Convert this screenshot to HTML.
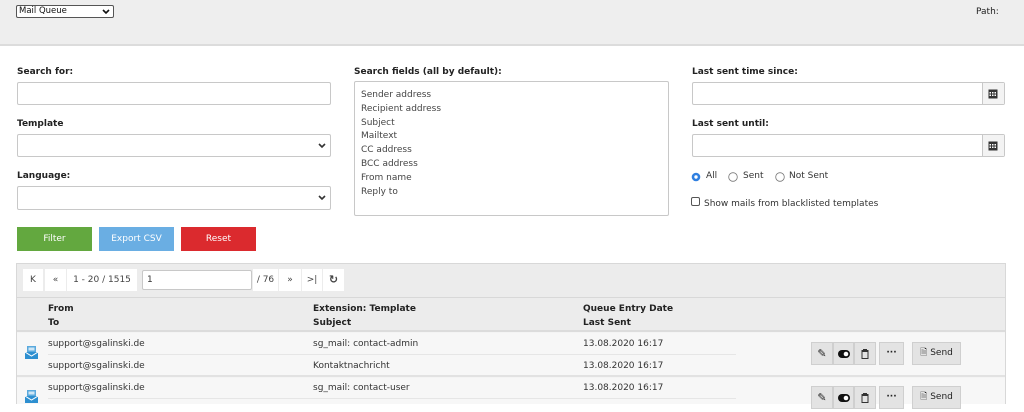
<!DOCTYPE html>
<html><head><meta charset="utf-8"><style>
*{box-sizing:border-box;margin:0;padding:0}
body{width:1024px;height:404px;overflow:hidden;background:#fff;font-family:"DejaVu Sans","Liberation Sans",sans-serif;font-size:9px;color:#333;position:relative}
.a{position:absolute}
.lbl{font-weight:bold;color:#222}
.inp{background:#fff;border:1px solid #c8c8c8;border-radius:2px}
.btn{color:#fff;text-align:center;line-height:24px;font-size:9px}
.pb{background:#fff;height:22px;top:269px;line-height:22px;text-align:center;color:#444}
.hdr{font-weight:bold;color:#222}
.ab{background:#e3e3e3;border:1px solid #cfcfcf;height:23px;line-height:21px;text-align:center;color:#222}
</style></head><body>
<div class="a" style="left:0;top:0;width:1024px;height:46px;background:#eeeeee;border-bottom:2px solid #dcdcdc"></div>
<div class="a" style="left:16px;top:5px;width:98px;height:13px;border:1px solid #555;border-radius:2px;background:#fff;font-size:8.5px;line-height:11px;padding-left:2px;color:#111">Mail Queue<svg class="a" style="right:3px;top:3px" width="8" height="6"><path d="M1 1 L4 4 L7 1" stroke="#111" stroke-width="1.6" fill="none"/></svg></div>
<div class="a" style="left:976px;top:7px;color:#222">Path:</div>

<div class="a lbl" style="left:17px;top:67px">Search for:</div>
<div class="a inp" style="left:17px;top:82px;width:314px;height:23px"></div>
<div class="a lbl" style="left:17px;top:119px">Template</div>
<div class="a inp" style="left:17px;top:134px;width:314px;height:23px"><svg class="a" style="right:4px;top:8px" width="8" height="6"><path d="M1 1 L4 4 L7 1" stroke="#333" stroke-width="1.6" fill="none"/></svg></div>
<div class="a lbl" style="left:17px;top:171px">Language:</div>
<div class="a inp" style="left:17px;top:186px;width:314px;height:24px"><svg class="a" style="right:4px;top:8px" width="8" height="6"><path d="M1 1 L4 4 L7 1" stroke="#333" stroke-width="1.6" fill="none"/></svg></div>
<div class="a btn" style="left:17px;top:227px;width:75px;height:24px;background:#63a83f">Filter</div>
<div class="a btn" style="left:99px;top:227px;width:75px;height:24px;background:#6aaee3">Export CSV</div>
<div class="a btn" style="left:181px;top:227px;width:75px;height:24px;background:#db2a2e">Reset</div>

<div class="a lbl" style="left:354px;top:67px">Search fields (all by default):</div>
<div class="a inp" style="left:354px;top:81px;width:315px;height:135px;padding:7px 0 0 6px;line-height:13.8px;color:#444">Sender address<br>Recipient address<br>Subject<br>Mailtext<br>CC address<br>BCC address<br>From name<br>Reply to</div>

<div class="a lbl" style="left:692px;top:67px">Last sent time since:</div>
<div class="a inp" style="left:692px;top:82px;width:313px;height:23px"><div class="a" style="right:0;top:0;width:22px;height:21px;background:#f3f3f3;border-left:1px solid #c8c8c8"></div><svg class="a" style="right:6px;top:5px" width="10" height="11"><rect x="0.5" y="1.5" width="9" height="9" fill="#333"/><g fill="#fff"><rect x="1.5" y="4" width="1.5" height="1.5"/><rect x="4" y="4" width="1.5" height="1.5"/><rect x="6.5" y="4" width="1.5" height="1.5"/><rect x="1.5" y="6.5" width="1.5" height="1.5"/><rect x="4" y="6.5" width="1.5" height="1.5"/><rect x="6.5" y="6.5" width="1.5" height="1.5"/></g></svg></div>
<div class="a lbl" style="left:692px;top:119px">Last sent until:</div>
<div class="a inp" style="left:692px;top:134px;width:313px;height:23px"><div class="a" style="right:0;top:0;width:22px;height:21px;background:#f3f3f3;border-left:1px solid #c8c8c8"></div><svg class="a" style="right:6px;top:5px" width="10" height="11"><rect x="0.5" y="1.5" width="9" height="9" fill="#333"/><g fill="#fff"><rect x="1.5" y="4" width="1.5" height="1.5"/><rect x="4" y="4" width="1.5" height="1.5"/><rect x="6.5" y="4" width="1.5" height="1.5"/><rect x="1.5" y="6.5" width="1.5" height="1.5"/><rect x="4" y="6.5" width="1.5" height="1.5"/><rect x="6.5" y="6.5" width="1.5" height="1.5"/></g></svg></div>
<svg class="a" style="left:691px;top:172px" width="10" height="10"><circle cx="5" cy="5" r="4.3" fill="#2f7fe0"/><circle cx="5" cy="5" r="1.7" fill="#fff"/></svg>
<div class="a" style="left:706px;top:171px">All</div>
<svg class="a" style="left:728px;top:172px" width="10" height="10"><circle cx="5" cy="5" r="4.3" fill="#fff" stroke="#777" stroke-width="0.8"/></svg>
<div class="a" style="left:743px;top:171px">Sent</div>
<svg class="a" style="left:775px;top:172px" width="10" height="10"><circle cx="5" cy="5" r="4.3" fill="#fff" stroke="#777" stroke-width="0.8"/></svg>
<div class="a" style="left:789px;top:171px">Not Sent</div>
<div class="a" style="left:691px;top:197px;width:9px;height:9px;border:1px solid #555;border-radius:2px;background:#fff"></div>
<div class="a" style="left:704px;top:199px">Show mails from blacklisted templates</div>

<div class="a" style="left:16px;top:263px;width:990px;height:141px;border:1px solid #d8d8d8;background:#f4f4f4"></div>
<div class="a" style="left:17px;top:264px;width:988px;height:34px;background:#ececec;border-bottom:1px solid #d8d8d8"></div>
<div class="a pb" style="left:23px;width:20px">K</div>
<div class="a pb" style="left:45px;width:21px">«</div>
<div class="a pb" style="left:67px;width:70px">1 - 20 / 1515</div>
<div class="a inp" style="left:142px;top:270px;width:110px;height:20px;line-height:18px;padding-left:4px">1</div>
<div class="a pb" style="left:253px;width:25px">/ 76</div>
<div class="a pb" style="left:279px;width:22px">»</div>
<div class="a pb" style="left:302px;width:20px">&gt;|</div>
<div class="a pb" style="left:323px;width:21px;font-weight:bold;font-size:11px">&#8635;</div>

<div class="a" style="left:17px;top:298px;width:988px;height:34px;background:#ececec;border-bottom:2px solid #dcdcdc"></div>
<div class="a hdr" style="left:48px;top:303px;line-height:13.5px">From<br>To</div>
<div class="a hdr" style="left:313px;top:303px;line-height:13.5px">Extension: Template<br>Subject</div>
<div class="a hdr" style="left:583px;top:303px;line-height:13.5px">Queue Entry Date<br>Last Sent</div>

<div class="a" style="left:17px;top:333px;width:988px;height:44px;background:#f7f7f7;border-bottom:2px solid #e2e2e2"></div>
<div class="a" style="left:48px;top:354px;width:688px;height:1px;background:#e6e6e6"></div>
<div class="a" style="left:17px;top:378px;width:988px;height:26px;background:#f7f7f7"></div>
<div class="a" style="left:48px;top:398px;width:688px;height:1px;background:#e6e6e6"></div>

<svg class="a" style="left:25px;top:346px" width="13" height="13"><rect x="2" y="0" width="9" height="7" fill="#5aa9dd"/><rect x="3.5" y="1.5" width="6" height="3" fill="#cfe6f5"/><path d="M0 6 L13 6 L13 13 L0 13Z" fill="#2d8fd0"/><path d="M0 6 L6.5 10 L13 6" stroke="#fff" stroke-width="1" fill="none"/></svg>
<svg class="a" style="left:25px;top:390px" width="13" height="13"><rect x="2" y="0" width="9" height="7" fill="#5aa9dd"/><rect x="3.5" y="1.5" width="6" height="3" fill="#cfe6f5"/><path d="M0 6 L13 6 L13 13 L0 13Z" fill="#2d8fd0"/><path d="M0 6 L6.5 10 L13 6" stroke="#fff" stroke-width="1" fill="none"/></svg>

<div class="a" style="left:48px;top:339px">support@sgalinski.de</div>
<div class="a" style="left:48px;top:361px">support@sgalinski.de</div>
<div class="a" style="left:313px;top:339px">sg_mail: contact-admin</div>
<div class="a" style="left:313px;top:361px">Kontaktnachricht</div>
<div class="a" style="left:583px;top:339px">13.08.2020 16:17</div>
<div class="a" style="left:583px;top:361px">13.08.2020 16:17</div>
<div class="a" style="left:48px;top:383px">support@sgalinski.de</div>
<div class="a" style="left:313px;top:383px">sg_mail: contact-user</div>
<div class="a" style="left:583px;top:383px">13.08.2020 16:17</div>

<div class="a ab" style="left:811px;top:342px;width:22px;font-size:11px">&#9998;</div>
<div class="a ab" style="left:833px;top:342px;width:21px"><svg width="12" height="8" style="margin-top:7px"><rect x="0" y="0" width="12" height="8" rx="4" fill="#111"/><circle cx="8" cy="4" r="2.3" fill="#fff"/></svg></div>
<div class="a ab" style="left:854px;top:342px;width:22px"><svg width="8" height="10" style="margin-top:6px"><path d="M0.5 1.5H7.5M2.5 1.5V0.5H5.5V1.5M1 2.5H7V9.5H1Z" stroke="#333" fill="none" stroke-width="1"/></svg></div>
<div class="a ab" style="left:879px;top:342px;width:25px;font-weight:bold">···</div>
<div class="a ab" style="left:912px;top:342px;width:49px">&#128462; Send</div>

<div class="a ab" style="left:811px;top:386px;width:22px;font-size:11px">&#9998;</div>
<div class="a ab" style="left:833px;top:386px;width:21px"><svg width="12" height="8" style="margin-top:7px"><rect x="0" y="0" width="12" height="8" rx="4" fill="#111"/><circle cx="8" cy="4" r="2.3" fill="#fff"/></svg></div>
<div class="a ab" style="left:854px;top:386px;width:22px"><svg width="8" height="10" style="margin-top:6px"><path d="M0.5 1.5H7.5M2.5 1.5V0.5H5.5V1.5M1 2.5H7V9.5H1Z" stroke="#333" fill="none" stroke-width="1"/></svg></div>
<div class="a ab" style="left:879px;top:386px;width:25px;font-weight:bold">···</div>
<div class="a ab" style="left:912px;top:386px;width:49px">&#128462; Send</div>
</body></html>
